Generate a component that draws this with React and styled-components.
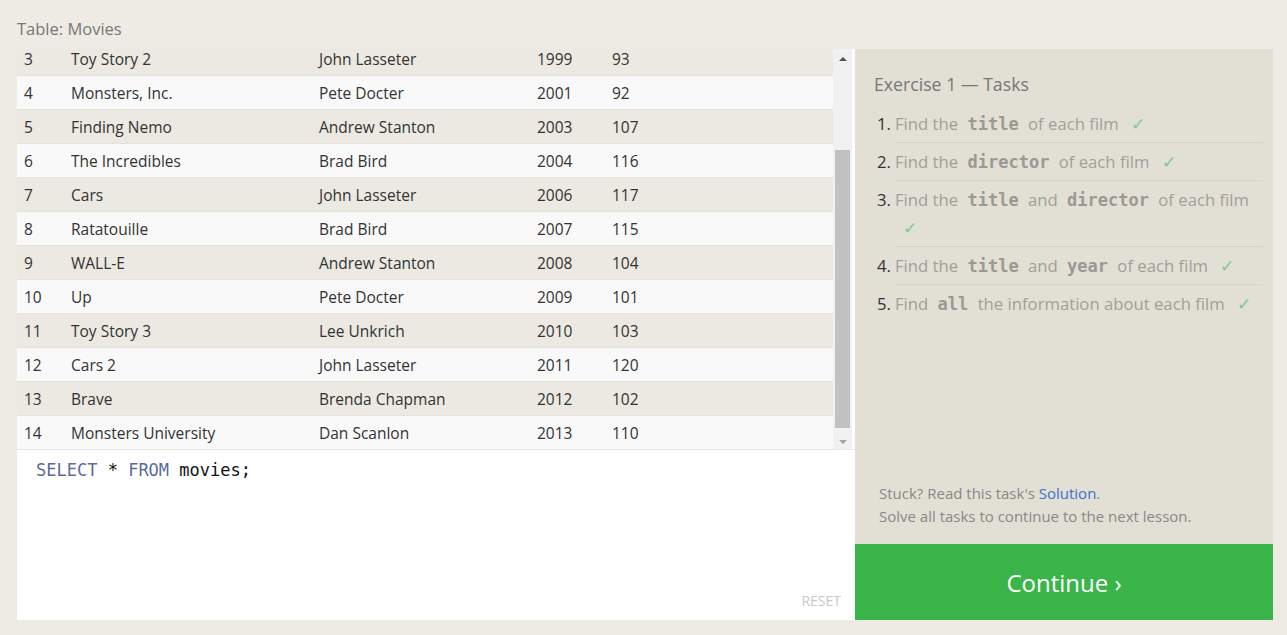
import React, { useLayoutEffect, useRef } from 'react'
import styled, { createGlobalStyle } from 'styled-components'

const GlobalStyle = createGlobalStyle`
    html, body {
        margin: 0;
        padding: 0;
        background: #eeebe4;
        font-family: "Open Sans", "Noto Sans", sans-serif;
        color: #333;
    }
`

const movies = [
    [1, 'Toy Story', 'John Lasseter', 1995, 81],
    [2, "A Bug's Life", 'John Lasseter', 1998, 95],
    [3, 'Toy Story 2', 'John Lasseter', 1999, 93],
    [4, 'Monsters, Inc.', 'Pete Docter', 2001, 92],
    [5, 'Finding Nemo', 'Andrew Stanton', 2003, 107],
    [6, 'The Incredibles', 'Brad Bird', 2004, 116],
    [7, 'Cars', 'John Lasseter', 2006, 117],
    [8, 'Ratatouille', 'Brad Bird', 2007, 115],
    [9, 'WALL-E', 'Andrew Stanton', 2008, 104],
    [10, 'Up', 'Pete Docter', 2009, 101],
    [11, 'Toy Story 3', 'Lee Unkrich', 2010, 103],
    [12, 'Cars 2', 'John Lasseter', 2011, 120],
    [13, 'Brave', 'Brenda Chapman', 2012, 102],
    [14, 'Monsters University', 'Dan Scanlon', 2013, 110],
]

const tasks = [
    ['Find the ', ['title'], ' of each film'],
    ['Find the ', ['director'], ' of each film'],
    ['Find the ', ['title'], ' and ', ['director'], ' of each film'],
    ['Find the ', ['title'], ' and ', ['year'], ' of each film'],
    ['Find ', ['all'], ' the information about each film'],
]

function App() {
    const scrollRef = useRef(null)

    // table is scrolled all the way down, like in the shot
    useLayoutEffect(() => {
        const el = scrollRef.current
        if (el) el.scrollTop = el.scrollHeight
    }, [])

    return (
        <Page>
            <GlobalStyle />
            <TableLabel>Table: Movies</TableLabel>
            <Workspace>
                <LeftColumn>
                    <TableArea>
                        <TableViewport ref={scrollRef}>
                            <MovieTable>
                                <colgroup>
                                    <col style={{ width: 47 }} />
                                    <col style={{ width: 248 }} />
                                    <col style={{ width: 218 }} />
                                    <col style={{ width: 75 }} />
                                    <col />
                                </colgroup>
                                <thead>
                                    <tr>
                                        <th>Id</th>
                                        <th>Title</th>
                                        <th>Director</th>
                                        <th>Year</th>
                                        <th>Length_minutes</th>
                                    </tr>
                                </thead>
                                <tbody>
                                    {movies.map((m) => (
                                        <Row key={m[0]} $odd={m[0] % 2 === 1}>
                                            {m.map((v, i) => (
                                                <td key={i}>{v}</td>
                                            ))}
                                        </Row>
                                    ))}
                                </tbody>
                            </MovieTable>
                        </TableViewport>
                        <ScrollTrack>
                            <ArrowButton>
                                <Arrow $up />
                            </ArrowButton>
                            <TrackSpace />
                            <Thumb />
                            <ArrowButton>
                                <Arrow />
                            </ArrowButton>
                        </ScrollTrack>
                    </TableArea>
                    <Editor>
                        <Code>
                            <Keyword>SELECT</Keyword> * <Keyword>FROM</Keyword> movies;
                        </Code>
                        <ResetButton>RESET</ResetButton>
                    </Editor>
                </LeftColumn>
                <RightColumn>
                    <TasksPanel>
                        <TasksTitle>Exercise 1 — Tasks</TasksTitle>
                        <TaskList>
                            {tasks.map((parts, i) => (
                                <Task key={i}>
                                    <TaskNumber>{i + 1}.</TaskNumber>
                                    <TaskText $last={i === tasks.length - 1}>
                                        {parts.map((p, j) =>
                                            Array.isArray(p) ? <TaskCode key={j}>{p[0]}</TaskCode> : <span key={j}>{p}</span>
                                        )}{' '}
                                        <Check>✓</Check>
                                    </TaskText>
                                </Task>
                            ))}
                        </TaskList>
                        <Hint>
                            Stuck? Read this task's <a href="#">Solution</a>.
                            <br />
                            Solve all tasks to continue to the next lesson.
                        </Hint>
                    </TasksPanel>
                    <ContinueButton>Continue ›</ContinueButton>
                </RightColumn>
            </Workspace>
        </Page>
    )
}

const Page = styled.div`
    padding: 15px 14px 15px 17px;
    box-sizing: border-box;
    height: 635px;
    display: flex;
    flex-direction: column;
`

const TableLabel = styled.div`
    font-size: 16.5px;
    color: #777;
    height: 34px;
    line-height: 28px;
`

const Workspace = styled.div`
    display: flex;
    height: 571px;
`

const LeftColumn = styled.div`
    width: 838px;
    display: flex;
    flex-direction: column;
    background: #fff;
`

const TableArea = styled.div`
    height: 400px;
    display: flex;
    padding-right: 3px;
    background: #fff;
`

const TableViewport = styled.div`
    flex: 1;
    overflow: hidden;
    background: #f9f9f9;
`

const ScrollTrack = styled.div`
    width: 19px;
    display: flex;
    flex-direction: column;
    background: #f1f1f1;
`

const ArrowButton = styled.div`
    height: 17px;
    display: flex;
    align-items: center;
    justify-content: center;
`

const Arrow = styled.div`
    width: 0;
    height: 0;
    border-left: 4px solid transparent;
    border-right: 4px solid transparent;
    ${(p) =>
        p.$up
            ? 'border-bottom: 4px solid #505050; margin-top: 3px;'
            : 'border-top: 4px solid #a3a3a3; margin-top: 2px;'}
`

const TrackSpace = styled.div`
    flex: 1;
`

const Thumb = styled.div`
    height: 278px;
    margin: 0 2px 4px;
    background: #c1c1c1;
`

const MovieTable = styled.table`
    width: 100%;
    border-collapse: collapse;
    table-layout: fixed;
    font-size: 15.5px;

    th {
        text-align: left;
        font-weight: 600;
        height: 34px;
        padding: 0 7px;
        background: #e6e3da;
    }
`

const Row = styled.tr`
    background: ${(p) => (p.$odd ? '#ebe9e2' : '#f9f9f9')};
    border-top: 1px solid #e4e2dc;

    td {
        height: 33px;
        padding: 0 7px;
        white-space: nowrap;
        color: #333;
    }
`

const Editor = styled.div`
    flex: 1;
    position: relative;
    background: #fff;
    border-top: 1px solid #e6e6e6;
    padding: 9px 19px;
`

const Code = styled.div`
    font-family: "DejaVu Sans Mono", "Liberation Mono", monospace;
    font-size: 17px;
    line-height: 22px;
    color: #111;
`

const Keyword = styled.span`
    color: #5b6c9c;
`

const ResetButton = styled.div`
    position: absolute;
    right: 14px;
    bottom: 10px;
    font-size: 14px;
    color: #c8c8c8;
`

const RightColumn = styled.div`
    width: 418px;
    display: flex;
    flex-direction: column;
`

const TasksPanel = styled.div`
    flex: 1;
    background: #e2dfd5;
    padding: 22px 10px 16px 19px;
    display: flex;
    flex-direction: column;
`

const TasksTitle = styled.div`
    font-size: 17.7px;
    color: #777;
    line-height: 26px;
    margin-bottom: 8px;
`

const TaskList = styled.ol`
    list-style: none;
    margin: 0;
    padding: 0;
    flex: 1;
`

const Task = styled.li`
    display: flex;
    font-size: 16.7px;
    line-height: 28px;
`

const TaskNumber = styled.span`
    width: 18px;
    padding: 5px 0 0 3px;
    color: #333;
    flex-shrink: 0;
`

const TaskText = styled.div`
    flex: 1;
    color: #a09f9a;
    padding: 5px 0 4px;
    border-bottom: 1px solid ${(p) => (p.$last ? 'transparent' : '#d5d2c8')};
`

const TaskCode = styled.code`
    font-family: "DejaVu Sans Mono", "Liberation Mono", monospace;
    font-weight: bold;
    font-size: 17px;
    color: #9a9993;
    padding: 0 5px;
`

const Check = styled.span`
    color: #7fc88e;
    margin-left: 8px;
`

const Hint = styled.div`
    font-size: 15px;
    line-height: 23px;
    color: #888;
    padding-left: 5px;

    a {
        color: #3d6fd0;
        text-decoration: none;
    }
`

const ContinueButton = styled.div`
    height: 76px;
    background: #3ab54a;
    color: #fff;
    font-size: 24px;
    display: flex;
    align-items: center;
    justify-content: center;
    cursor: pointer;
`

export default App
